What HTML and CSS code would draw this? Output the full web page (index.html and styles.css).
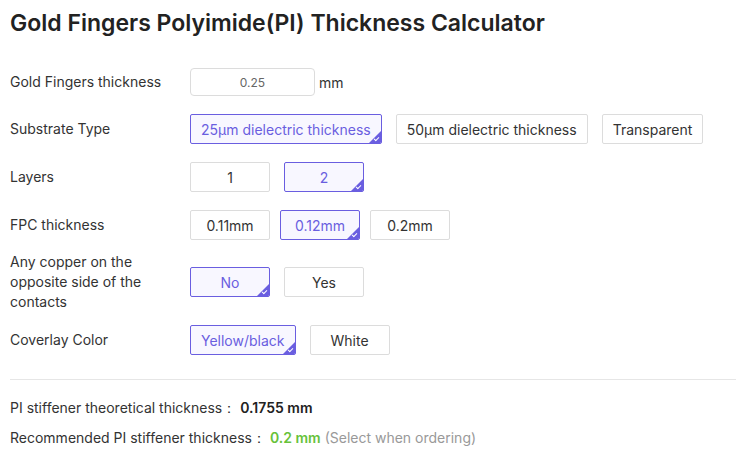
FILE: index.html
```html
<!DOCTYPE html>
<html lang="en">
<head>
  <meta charset="UTF-8" />
  <meta name="viewport" content="width=device-width, initial-scale=1" />
  <title>Gold Fingers PI Thickness Calculator</title>
  <link rel="stylesheet" href="styles.css">
</head>
<body>

  <main class="calc">
    <h1>Gold Fingers Polyimide(PI) Thickness Calculator</h1>

    <div class="row first">
      <div class="label">Gold Fingers thickness</div>
      <div class="opts">
        <input class="num" type="text" value="0.25">
        <span class="unit">mm</span>
      </div>
    </div>

    <div class="row">
      <div class="label">Substrate Type</div>
      <div class="opts">
        <button class="opt selected">25μm dielectric thickness</button>
        <button class="opt">50μm dielectric thickness</button>
        <button class="opt">Transparent</button>
      </div>
    </div>

    <div class="row">
      <div class="label">Layers</div>
      <div class="opts">
        <button class="opt">1</button>
        <button class="opt selected">2</button>
      </div>
    </div>

    <div class="row">
      <div class="label">FPC thickness</div>
      <div class="opts tight">
        <button class="opt">0.11mm</button>
        <button class="opt selected">0.12mm</button>
        <button class="opt">0.2mm</button>
      </div>
    </div>

    <div class="row tall">
      <div class="label">Any copper on the opposite side of the contacts</div>
      <div class="opts">
        <button class="opt selected">No</button>
        <button class="opt">Yes</button>
      </div>
    </div>

    <div class="row">
      <div class="label">Coverlay Color</div>
      <div class="opts">
        <button class="opt selected">Yellow/black</button>
        <button class="opt">White</button>
      </div>
    </div>

    <hr class="divider">

    <p class="result">PI stiffener theoretical thickness：<b>0.1755 mm</b></p>
    <p class="result">Recommended PI stiffener thickness：<b class="good">0.2 mm</b> <span class="hint">(Select when ordering)</span></p>
  </main>

</body>
</html>
```

FILE: styles.css
```css
* {
  margin: 0; padding: 0; box-sizing: border-box;
}
body {
  font-family: Inter, 'Noto Sans', sans-serif;
  background: #fff;
  color: #333;
}
.calc {
  padding: 9px 0 0 10px;
}
h1 {
  font-size: 23px;
  font-weight: 600;
  color: #222;
  line-height: 28px;
  margin-bottom: 30px;
}
.row {
  display: flex;
  align-items: center;
  min-height: 30px;
  margin-bottom: 18px;
}
.row.first {
  margin-bottom: 17px;
}
.row.tall {
  margin-top: -6px;
  margin-bottom: 13px;
}
.label {
  width: 180px;
  font-size: 14px;
  line-height: 20px;
  padding-right: 20px;
}
.opts {
  display: flex;
  align-items: center;
  gap: 14px;
}
.opts.tight {
  gap: 10px;
}
.num {
  width: 125px;
  height: 28px;
  border: 1px solid #dcdcdc;
  border-radius: 4px;
  text-align: center;
  font-family: inherit;
  font-size: 12px;
  color: #666;
  outline: none;
}
.unit {
  font-size: 14px;
  margin-left: -10px;
}
.opt {
  position: relative;
  min-width: 80px;
  height: 30px;
  padding: 0 10px;
  border: 1px solid #dcdcdc;
  border-radius: 2px;
  background: #fff;
  font-family: inherit;
  font-size: 14px;
  color: #333;
  cursor: pointer;
  overflow: hidden;
}
.opt.selected {
  border-color: #6a5ee0;
  background: #f8f7ff;
  color: #6a5ee0;
}
/* corner tick on the chosen option */
.opt.selected::after {
  content: '';
  position: absolute;
  right: 0; bottom: 0;
  width: 0; height: 0;
  border-style: solid;
  border-width: 0 0 12px 12px;
  border-color: transparent transparent #6a5ee0 transparent;
}
.opt.selected::before {
  content: '';
  position: absolute;
  right: 2px; bottom: 3px;
  width: 4px; height: 2px;
  border-left: 1px solid #fff;
  border-bottom: 1px solid #fff;
  transform: rotate(-45deg);
  z-index: 1;
}
.divider {
  border: 0;
  border-top: 1px solid #e6e6e6;
  margin: 24px 0 18px;
}
.result {
  font-size: 14px;
  line-height: 20px;
  margin-bottom: 10px;
}
.result b {
  font-weight: 600;
  color: #222;
  margin-left: 4px;
}
.result b.good {
  color: #67c23a;
}
.hint {
  color: #999;
}
```
